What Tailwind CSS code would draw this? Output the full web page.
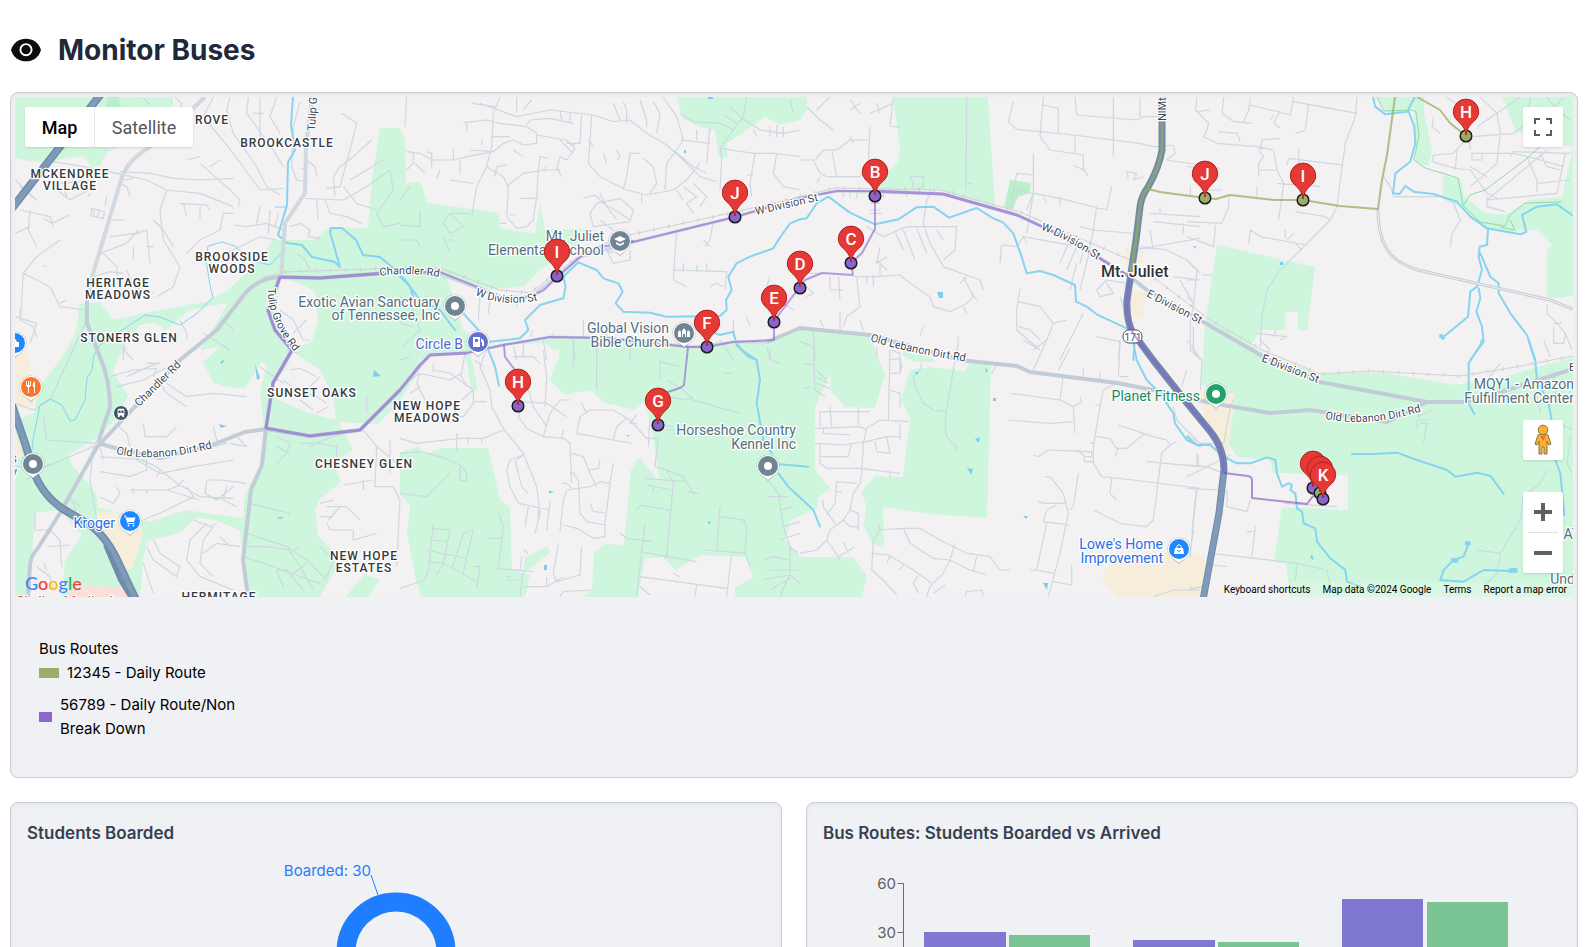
<!DOCTYPE html>
<html lang="en">
<head>
<meta charset="utf-8">
<title>Monitor Buses</title>
<script src="https://cdn.jsdelivr.net/npm/@tailwindcss/browser@4"></script>
</head>
<body class="bg-white font-['Inter',sans-serif] text-black">
<main class="h-screen overflow-hidden pt-8 pr-[9px] pl-[10px]">
  <header class="mb-6 flex items-center gap-4">
    <svg class="h-8 w-8" viewBox="0 2 32 32" aria-hidden="true"><path d="M1 18C3.500 10 9.200 6.700 16 6.700S28.500 10 31 18c-2.500 8-8.200 11.300-15 11.300S3.500 26 1 18Z" fill="#0d0d0d"/><circle cx="16" cy="17.700" r="5.600" fill="none" stroke="#fff" stroke-width="1.900"/></svg>
    <h1 class="text-[28px] leading-9 font-bold text-gray-800">Monitor Buses</h1>
  </header>

  <section class="rounded-lg border border-[#c9ced6] bg-[#f0f1f5] p-1 pb-9 inset-shadow-sm">
    <div class="relative overflow-hidden font-['Roboto',sans-serif]">
      <svg class="h-[500px] w-full" viewBox="15 97 1558 500" preserveAspectRatio="xMidYMid slice" role="img" aria-label="Map of bus routes around Mt. Juliet">
        <defs>
          <g id="pin"><path d="M0-1C-1-8-4.500-11.500-8.200-15-11-17.700-12.700-20.500-12.700-24.200A12.700 12.700 0 0 1 12.700-24.200C12.700-20.500 11-17.700 8.200-15 4.500-11.500 1-8 0-1Z" fill="#e53935" stroke="#b3211c"/></g>
          <g id="poi"><path d="M0 15.500C-2 11.500-11.500 9.500-11.500 0a11.500 11.500 0 0 1 23 0C11.500 9.500 2 11.500 0 15.500Z" fill="#8a949c" opacity=".5"/><path d="M0 14C-2 10.500-11 9.500-11 0a11 11 0 0 1 22 0C11 9.500 2 10.500 0 14Z" fill="#fff"/></g>
        </defs>
        <rect x="0" y="90" width="1590" height="520" fill="#f3f1f2"/>

        <!-- Parks and woods -->
        <g fill="#cef6dd">
          <path d="M15 97H173V120L108 152 100 165 92 167 83 156 65 158 50 163 30 161 15 158Z"/>
          <path d="M15 422L35 412 37 390 60 360 75 335 80 304 100 302 113 320 150 312 205 302 225 292 245 275 262 258 272 240H313L330 227 368 228 372 180 380 128H400L405 140 406 183 421 182 427 203 500 213 499 228 535 234 540 203 545 229 585 229 600 240 583 242 540 270 520 290H493L470 285 447 275 463 330 480 345 470 352 478 390 471 391 465 355H430L400 400 420 400 417 445 424 455 443 447 488 448 500 500 510 507 512 570 530 575 525 597H421L415 575 407 533 410 505 400 495V597H15Z"/>
          <path d="M495 345L550 338 630 338 690 345 767 342 800 328 870 337 885 375 875 408 845 407 830 390 831 373 815 407 815 470 830 488 818 498 817 508 790 520 785 540 800 557H853L867 575 862 597H735L735 587 753 578 747 557 700 555 675 570 663 557 645 558 638 597H582L592 590 594 553 605 544 624 545 632 460 640 458 660 483 650 420 645 400 635 410 605 403 590 390 565 395 550 380 560 355 545 343Z"/>
          <path d="M528 535L538 537 551 552 533 566 523 573Z"/>
          <path d="M903 350L930 355 935 362H915L903 356ZM910 370L930 367 965 371 970 362 991 364 987 518 930 514 883 507 884 548 872 543 864 526 866 505 861 492 875 476 903 477 910 418 901 400Z"/>
          <path d="M677 97L682 118 700 127 715 130 719 157H727V143L740 135 765 117 780 125 800 120 807 110V97ZM893 97L900 150 897 163 870 189 938 189 995 206 988 97Z"/>
          <path d="M1217 245L1315 267 1307 330H1298V312H1285V330H1260L1256 338 1250 345 1272 358 1320 374 1380 372 1455 385 1500 378 1573 357V597H1290L1286 563 1274 562 1282 507 1348 510V475L1273 473 1270 460 1238 457 1225 440 1235 395 1201 385 1205 325Z"/>
          <path d="M1375 97L1390 115 1414 108 1416 162 1428 166 1432 150 1424 113V97ZM1443 175L1462 180 1464 196 1485 213 1505 215 1530 200 1562 197 1573 147V295L1560 298H1547V250L1552 245 1537 230 1520 230 1510 234 1490 230 1470 215 1443 195ZM1502 97H1573V148L1515 130Z"/>
        </g>
        <path fill="#b9efcb" d="M107 97H118L124 115H105ZM1010 180L1031 183 1030 193 1018 197 1013 209 1004 208Z"/>

        <!-- Neighbourhoods inside the green belt -->
        <g fill="#f3f1f2">
          <path d="M128 395L113 372 122 350 140 325 155 322 165 330 190 310 215 305 228 303 200 350 220 347 203 362 213 382 225 387 245 388 262 362 267 366 260 390 264 430 262 460 245 495 243 518 185 510 150 522 110 510 98 508 97 495 85 480 72 465 68 455 98 437 115 420Z"/>
          <path d="M280 278L300 283 315 292 318 320 312 342 296 348 275 325ZM293 352L320 370 333 395 336 420 306 412 278 400 268 385 285 370Z"/>
          <path d="M338 422L378 424 400 400 422 400 417 447 400 452V597H368L380 580 365 575 345 597H320L340 560 318 535 315 510 320 499 341 482 333 463 353 450Z"/>
          <path d="M35 513L60 510 82 535 65 560 62 597H30L32 555ZM147 541L180 533 195 518 215 520 240 530 244 565 250 597H140L143 560Z"/>
          <path d="M420 360L455 352 466 358 472 392 488 392 480 352 498 345 560 350 548 380 570 400 620 420 640 455 600 520 520 560 512 505 500 448H420ZM495 330L463 330 447 278 480 290 540 285 580 255 700 235 700 335 550 335Z"/>
        </g>
        <g fill="#f6eddb">
          <path d="M15 345L28 355 34 405 15 410ZM96 513L110 511 140 520 143 535 132 570 124 569 96 525ZM15 430L23 455 15 462Z"/>
          <path d="M1124 248L1142 247 1143 263 1126 263ZM1125 290L1145 292 1144 318 1122 317ZM1200 390L1235 396 1228 452 1220 448 1205 425ZM1107 566L1130 558 1187 549 1206 560 1200 597H1117L1102 580Z"/>
        </g>
        <path fill="#fbdfdd" d="M70 590L90 586 124 588 128 597H70Z"/>

        <!-- Residential streets -->
        <g fill="none" stroke="#cdd8e1" stroke-width="3.600" stroke-linejoin="round">
          <g transform="scale(.33333)">
            <path d="M430 292L450 315M525 292 545 310 540 330M690 292L680 330 700 400 770 500 800 560 840 585M745 292 740 340 820 450 850 500M640 292 610 350 700 460 780 570 850 565M780 292V420M830 292 810 350 840 400M900 305L880 380 875 500 890 540 915 545M920 480L945 500 950 530M905 505H920M1025 340L1070 370 1050 450 1020 560 980 565M1115 420L1060 470 1020 500 1000 530 1005 590M1150 480L1100 510 1050 540M1170 510L1100 560 1030 600 915 595M1170 510L1180 570 1130 640 1150 680 1200 670M1030 560L1070 610 1130 630M975 600L990 640 1040 650 1085 670M870 680L900 670 930 690 925 710 960 715M950 600L955 660M890 760 915 780 930 810"/>
            <path d="M160 485L250 500 350 520 440 540 500 570M360 515 450 520 520 535 600 540 700 535M355 550L380 560 390 590M370 540L400 535M500 570L600 580 700 620M600 490 690 570 720 600 715 620M500 570L480 630 490 720 540 800 520 860 470 890M540 610L620 615 630 630M550 610 560 650M600 620V655M460 660L490 690 520 740M335 660H375M330 710 410 700 440 690 450 790M400 740V780M310 760 350 800 355 850M60 630L150 650 160 680M90 630L85 690 110 740M45 700L90 680M180 720L110 770 70 820 62 950M130 655 155 670 210 645M280 830L330 815 370 820M130 795 140 800M45 540L110 600 60 560M160 560L210 600 265 570 250 545 180 550M190 560 200 590M270 580L265 590M320 590 315 620M275 625L313 635 310 655 273 648ZM283 627 280 650M297 632 292 653M700 640L670 640 660 690 600 720 560 760M700 675 740 680 800 670 850 690M780 620 770 670M810 630 805 700M835 640 825 680M660 770L720 740 780 710 830 720M70 820L150 860 180 920 260 930M180 910 200 900M380 810L400 860 460 880M300 760L380 730 415 690M440 740 460 740M560 480 600 470M630 500 660 480M760 340H790M770 440 810 440"/>
          </g>
          <g transform="translate(0 300) scale(.33333)">
            <path d="M60 30V60L100 80 110 110M45 50 110 70 90 130M260 60 150 300 100 330 45 310M130 345 140 420 290 430M45 500H140L290 435M150 490 80 540M330 230 400 210 470 205 460 230M350 260 430 240 560 170M370 180 370 140 380 150M400 180 370 150M380 230 470 190M440 190H480M480 250 500 280 560 320M500 250 560 290 640 280 740 290M540 60 560 100 560 120M610 100 690 150M670 60 700 90M345 370 380 400 390 440M430 370 435 410M435 410H500L530 380M640 380 650 420 680 430 640 440M700 400 740 440 690 430M300 440 310 480M280 440 270 540 280 600 290 660M300 470 440 480 440 510 390 530 300 515M400 470 470 500 530 550 600 590 700 595M410 480 480 520 580 500 700 480M470 530 480 510M390 570H500L530 560M400 565V580M440 568V580M500 570 600 600M530 560 550 540M620 540 660 540 700 545 740 550M620 540 615 580 650 600 700 560M680 560 670 600 710 620M560 560 580 590 500 630 430 660M200 580 220 610 230 640M220 600 240 620M300 590 340 610 360 580 350 560M105 640V690L150 690 180 720 185 800M110 800 150 830 160 870M130 790 140 810M145 740 210 735M620 670 570 720 560 780 600 830 700 870M640 680 610 720 600 790 640 830M460 720 480 760 540 800 530 830 460 780 440 740M430 790 460 880M720 740 650 730 610 760M660 710 690 740M580 660 630 680 650 670M730 770 820 800 900 830 960 850M740 700 860 740 920 780 980 840M860 740 900 800 940 870M740 740 800 740 870 750M830 810H860L910 870M830 810 850 860M870 760 900 740M920 790 880 820M960 740 1000 780 980 830M780 200 850 250M870 210 900 205 950 230M850 240 890 270 950 290 980 310M900 300 940 330M930 260 960 230M950 340 985 320M860 150 900 160M840 30 880 60 910 120 930 120M880 100 920 60M830 410 870 430 860 460 830 490M830 440 870 460M900 430 960 430 1010 440 1010 470M930 440 970 420 1030 400M1100 290 1100 340M1090 390 1130 440 1180 480 1200 500M1130 440 1125 560 1180 560M1170 420V520M1030 555 1120 540M1090 540V570M980 620 1040 620 1080 660M985 660 1020 620M980 670 990 690 1060 690M1000 650 960 650M1060 690 1060 720 1130 700M1180 560 1200 600 1190 800M750 610 870 640M960 610 1000 600"/>
          </g>
          <g transform="translate(400 90) scale(.33333)">
            <path d="M20 20 15 110M300 22 280 70 275 170 260 230 230 290 215 380M215 40 290 50M240 40 350 80 450 60 580 75 640 95 690 90 740 130 800 165 850 210 900 260 950 275M350 22V65M395 30 370 60M480 60 485 90M510 65V100M380 105 390 90 450 85 520 100M190 98 260 90 300 100 380 110 410 130 410 160 370 165 340 150 310 160 280 185 210 180M200 98V125M245 150V165M275 140H330M410 135 500 150 525 175 500 210 480 200 470 240M480 150 520 190M500 155 525 165M340 180 370 200M280 185 200 200 160 210 100 210 60 190 20 185M80 185 95 190 95 230M40 190V220L20 240M160 175V210M180 210V250M45 220 75 250M120 240 110 265M150 270 220 280M260 230 310 260 325 290 320 380 350 415 380 410 400 390 410 320 415 240 420 200M285 260 290 230 320 225M320 290 370 250 440 240 480 240M360 325H415M330 375H345M320 400 300 400M420 200 445 205M440 225 430 240M470 230 485 260M545 75 540 160 500 160M575 75 565 220 600 260 680 300 740 315 820 300 860 270 900 220M565 150 580 170M640 40 660 90M670 35 680 60 680 100M720 30 740 90 740 110M760 35 780 70 770 130M790 22 830 80 850 150 830 180 800 220 795 300M845 150 930 160M890 120V150M930 110 920 220M820 180 880 230 920 250M610 190 620 220M650 180 660 200 650 210M690 190 680 260 670 300M690 190 720 190M730 205 760 230 770 280 750 310M725 310V340M550 325 585 315M585 315 610 340 660 370 690 390M600 310 620 350 650 390M570 370 590 340 660 325 700 360 690 395 580 410 570 370M640 420 600 390M850 290 890 320 860 340 880 370M880 280 920 320 900 350M830 300 850 330M960 300 965 200 960 175 1000 120 960 100 880 95 840 70M1040 20 1030 80 1000 120M960 175 1060 190 1120 190 1200 200M970 75 1010 100M990 50 1020 80 1080 120 1150 130 1200 120M1130 190 1120 250 1150 290 1200 300M1065 190 1050 280 1055 320M1040 255H1060M1170 30 1180 70M1060 120 1070 140M1110 110 1110 140M1130 105V140M1150 110V140"/>
            <path d="M830 420 820 570 860 590M820 540 980 545 975 600M850 520V545M890 525V545M920 520V545M940 395 930 450 915 470M910 450 930 470M930 590 950 580 970 590M620 480 640 520 690 510 690 480M0 405 60 410 60 360M130 400 150 370 210 370M150 370 190 410 150 430 130 400M130 440 150 490M140 450H160M0 450 50 450 60 470M0 330 30 290M0 620 40 660 60 720 10 770M0 700 40 710M390 740 400 720M460 745V730M550 740V690M620 745V700M240 620 235 690M270 630 265 670M350 650 350 620M340 770 350 810M370 760V790M430 750 440 810M520 745 525 810M590 745V790M1000 690V740M1040 680 1050 710M1110 780V810M600 470 640 490M1110 560 1100 590M1150 640 1180 660"/>
          </g>
          <g transform="translate(400 340) scale(.33333)">
            <path d="M260 25 240 80 270 150 275 200 310 265 370 340 410 440 420 520 405 580M225 60 250 80M195 40 185 100 150 120 60 100 50 130 80 190M30 160 60 140M100 70V95M0 60 30 50M60 100 30 120M180 100 200 140M185 180 220 150M100 90 150 100 220 150 220 190 190 230 160 230M220 185H260M0 295 50 310 180 295 250 295 310 270M170 280V330M205 295V310M245 295V310M430 30 440 110 435 200M340 50 400 50 420 70M370 30V50M380 130 400 200 440 260M370 185 440 190 500 230M370 185 355 230 380 265 430 290 490 295 510 310 515 430M480 180 450 220 430 290M480 180H510M490 270 485 295M545 190 560 220M530 280 540 230 570 210 640 210 690 240 740 295 770 295M530 280 640 300 695 310M640 300 650 260 680 235M710 225 690 250M750 235 745 320M775 290 765 380 800 390 820 430 800 650M710 250 690 250M800 390 850 410 880 460M730 415 860 425M740 435 815 450M760 440V460M895 460 860 455M720 495 810 510M720 495 710 510M370 345 330 360 320 390 330 440 355 490 450 510M345 360 365 440 385 460M370 345 350 360M385 500 375 560M415 500V530M450 485 440 570M520 400 535 420 540 520 560 545 615 555M515 340 550 350 570 400 590 440M600 360 595 385 570 390M640 370 630 430 600 425 570 440 500 450 490 480 480 575M630 430 615 550 615 590 580 595 530 565 490 555M570 490 580 515 615 518M510 400 525 400M485 430H500L515 445M475 610 460 700 470 725 540 705 545 620M370 740 440 740 490 710M440 710V740M370 690 360 770M290 685 400 695M295 680 310 560 295 520M260 595 305 595M320 720 370 720M320 710H330M365 650 360 690M370 630 385 640M100 550 85 690 75 720 0 745M75 630 200 655M100 565 150 570M90 600 145 605M85 665 130 670 230 725M215 570 190 580 155 690M220 570 200 655 190 700M240 680 230 745M220 680H240M150 570 130 670 110 705M0 340 60 335 120 350 180 375 200 400 200 425 180 420 180 380M0 460 80 470 120 430 150 400M480 770 490 755 580 750M660 580 680 595 760 605M735 550 710 770M720 635 890 665M790 645 795 655M720 710 980 745M720 740 750 765M890 735 885 770M820 700 840 710M960 500 950 630M960 530 1030 540 1040 560 1035 640 1050 680M915 630 1040 640M995 640 980 770M520 0V90M590 0V150M690 0 690 60M780 65 840 80M800 120 850 150 880 180 1020 220M780 60V120M800 170 860 180 880 170M960 0 1000 60M1100 20 1110 60 1140 70M970 100 1000 100M1105 420 1135 460 1150 560 1170 620V700L1140 770M1105 470H1165M1140 510 1180 500M1150 560 1200 545M1140 600 1200 580M1090 660 1120 650 1170 660M1100 690H1200M1085 720 1170 705 1200 730M1110 750 1170 715M1195 640 1170 620M780 270H820M785 255 820 260"/>
          </g>
          <g transform="translate(800 90) scale(.33333)">
            <path d="M20 50 60 90 100 120M50 60 90 20M150 30 180 70M150 60 180 40M210 70 280 40M230 40 240 70M280 22 270 110M275 110 300 110M0 210 40 210 60 250 80 260 180 260 205 230 210 110M45 210 70 180 110 180 150 150 205 150M95 180 110 260M150 140 160 160M60 260 50 280M500 22 500 120 497 300M500 280H515M335 300 340 280 330 260 370 260 370 290 340 300M640 35 625 95 650 118 720 125 820 135 1020 160 1060 170 1085 170 1120 165 1125 190 1100 210 1200 225M730 22 720 140 750 180 850 195 850 240 820 225M730 45 775 55 775 130M825 20 830 75 1010 90 1030 80 1080 80M1020 22V80M940 22V200M825 140V190M850 235 865 260M980 245 1010 250 1000 270 1030 260M980 245 985 265M650 250 700 255 700 190M650 250 630 370M700 255 700 310 680 360M645 300 700 310 780 325 920 360 935 290M730 320 740 340M780 320V350M890 350 880 420 865 500 840 600M840 410 880 420 1000 430M700 310 680 430M600 520 605 465 650 470 670 440 780 460 850 470M670 440 680 460M810 450 780 520M830 470 800 540M850 480 840 520M830 520 810 600M550 600 540 570 430 530 390 460 370 400 380 330 400 300M200 410 250 440 320 410 470 410 465 480 430 510M285 425 310 480M310 420 345 510M350 415 380 490M410 420 430 450M240 470 230 520 260 500M230 510 260 540M240 520V555M0 550 60 550M160 560 230 560 300 555 330 580 390 620 400 650 450 665 500 640 520 620 490 560M480 580 500 560M510 600 530 630M490 650 500 670M10 580 40 610 20 620M90 560 90 600 130 600M115 560 120 630M170 565 180 650 140 680 130 710M60 690 70 710M120 665V720M180 690 190 720M200 560V580M220 555V590M210 360H240M210 370H245M210 340H240M150 300V320M130 300V320M170 305V325M250 300V325M320 300V320M390 300V320M460 300V320M1050 370 1200 380M1060 395 1200 410M1080 350V370M1150 400V430M1020 470 1100 480 1160 510 1200 550M1000 480 1200 445M1050 420 1060 480M1120 560 1200 570M1140 570 1180 640M660 595 650 660 650 720 720 780M655 635 720 650 760 700 740 750 700 780M655 710 690 720 720 750M760 700 800 690M850 670 780 810M890 740 960 755M960 755 955 810M890 600 920 570 980 580M890 600 900 620 940 610 920 580M960 620 970 650M1180 710V780L1200 810M475 740 470 810M370 710 360 740M40 720 45 810"/>
          </g>
          <g transform="translate(800 340) scale(.33333)">
            <path d="M0 5 40 20 45 150 75 170M10 145 30 140M50 90 80 120M50 110 85 130M50 130 90 145M10 70 45 75M230 20V50M270 30 265 240M270 60 300 55 305 80 300 100H270M275 30 300 40 300 100M270 150 300 160 300 200M470 30 440 210 435 250 440 290 470 320 465 335M365 70 360 90 340 110 350 150 370 190 400 210 440 215M575 100 590 75M790 105 780 180 820 200 825 280M635 160 780 180M625 240 750 250 820 245M820 200 845 185 840 170M740 0 700 90M810 25 775 90M670 0 720 30M850 85V110M900 95V120M960 0 955 110M960 110H985M60 215 210 215M60 215V260M90 200 95 260M175 205 175 255M45 265 180 260 200 270M70 265V280L150 285M325 245 240 240 200 265 190 310 185 400 180 430 160 460 150 510 130 540 90 570 80 600 50 630 0 640M45 310 130 315 200 305 260 290 300 290M300 250V300M225 305 230 335 270 340 260 290M60 310V370L80 385 180 385 300 400M60 350H145L155 310M270 400V415M110 425 170 430M110 425 105 490 80 525M70 480 70 500 105 550M105 455H125M150 510 175 520V570M130 540 150 560 175 560M80 600 115 650 165 620M115 650 120 665M130 605 145 640M215 690 220 600 240 570 310 565 360 565 420 600 500 640 570 650 600 690 630 690M310 565 330 610 400 655 450 660 510 690 560 705M465 610 450 660 430 700 390 740 380 770M530 650 520 695M220 640 265 645 340 690 395 730M215 690 250 720 290 765M260 670 270 650M300 690 310 675M355 705 340 730 355 760M435 735 400 760M495 770 500 755 545 750 550 770M235 550 240 570M700 345 715 350 745 330 870 335M830 330 850 345 855 365 880 365M845 335H875V350H855M950 130 910 150 900 200 880 320 880 370 905 410 1000 420 1200 445M885 195H905M870 310H885M890 290 930 295 950 325 980 325 1035 280M955 255 1060 290 1100 300 1110 315 1085 340 1060 540 1040 560 960 550 880 510M1110 315 1130 305M1040 365 1200 380M955 325 945 350M1195 345V380M1190 440 1170 650M935 415 930 460 950 480M735 410 750 410 790 460 805 520 780 640 745 770M835 400 820 500 810 510M715 485 730 490 800 490M730 545 740 510 770 495M730 545 810 555M740 550 710 690 690 690M710 690 760 700M760 725 815 735 815 675M1120 200 1130 240 1200 310M1145 140 1160 90M1060 770 1120 750 1200 750M1170 740 1185 750"/>
          </g>
          <g transform="translate(1187 90) scale(.33333)">
            <path d="M30 22 25 60 65 100 60 120 50 140 90 160 210 170 260 180 270 240 290 280 275 390M30 65 70 60M95 125 150 130 160 155M110 22 105 70 140 95 195 100M190 22 185 60 170 95M190 45 310 75 320 22M280 60 260 100 280 115M260 75 250 90M320 35 510 70M510 22 505 80 475 160 460 270 450 350 430 390 350 470 280 540 240 600 225 680 220 770M365 45 355 120 325 130M220 180 225 150 280 145M215 180 230 200 215 220 215 260M215 240 270 240M300 225 305 205 465 225M335 175V220M270 280 400 290M325 365 415 380 430 390M125 320 125 350 105 400 0 395M85 405 80 470 0 440M185 460 190 420 220 440 360 465M295 420V445M320 430 300 450M320 455 345 480M210 290V320M10 290V320M0 230 100 235M60 300 105 300M0 510 30 540 20 640 10 700M0 570H30M0 620 20 640M45 555H75M210 730 300 740 280 750M265 720V740M10 690V780L30 800M590 260 610 290 620 320 760 320 800 340 820 390 795 430 790 470M740 80 735 110 760 130M830 155 800 190 740 195 735 215 805 235 850 240 900 310 930 325M810 180 805 240M855 190H885V210H855V190M885 190 980 190 1060 210 1130 230M845 135 850 180M860 140 980 130 1050 80 1060 50M1000 22 930 70 870 110M780 22 860 80M880 22 930 70 940 130 930 220 850 290M850 230 900 260M1020 200 1050 270 1050 305M1150 190 980 185 970 200M1050 280 1150 270M1080 180 900 330M900 330 1110 310 1135 190M900 320 900 350 955 365M1030 22 1020 80 1100 130M1060 190 1080 230 1120 240M1080 22 1110 60 1150 90M1130 22 1060 100M1080 645V670L1110 700 1135 730 1130 760H1100V710M1100 700H1125M1135 730 1155 780"/>
          </g>
          <g transform="translate(1187 340) scale(.33333)">
            <path d="M0 0 45 60 40 150M0 375 60 380 110 400M0 445 100 450M30 340V380M30 445 15 570M20 570 15 600M75 640 330 670 420 690 430 740M75 675 120 680M205 560 195 650M180 575H200M330 675 325 720M120 450 120 500 180 515 190 480M290 490 450 500M690 210 700 240 730 240M690 240V270M700 250H720L710 310M690 230 740 210M0 285 40 310 110 310 130 200 140 180M220 0 250 30M130 345 0 410M1080 390 1060 430 1010 470 1000 540 940 640 930 700 890 740M870 630 940 640M940 70 900 120M1100 100 1110 200M1050 170 1060 220M1100 240 1155 270M1150 290 1140 370 1155 400M0 750 40 740 60 750M1070 0 1090 50"/>
          </g>
        </g>

        <!-- Creeks, ponds and rivers -->
        <g fill="none" stroke="#86d4ef" stroke-width="6" stroke-linejoin="round" stroke-linecap="round">
          <path stroke-width="2" d="M293 97 291 125 295 150 288 162 287 205 278 235 287 243 302 245 312 257 335 262 340 267 330 232 331 228 342 228 356 240 363 255 380 257 392 267 405 280 420 300 440 310 455 330"/>
          <path stroke-width="1" d="M275 207H287M285 250 270 265 250 260 235 246 222 242 208 246 206 260 210 285 213 298 195 315 180 325 160 317 145 315 125 328 100 345 94 355 92 370 87 378 85 400 75 420 70 421 62 405 50 399 40 405 33 440 32 450"/>
          <g transform="translate(400 90) scale(.33333)"><path d="M0 560 30 590 40 620M190 670 235 720 240 750M270 755 360 745 385 720 375 690 420 645 490 625 497 590 490 560 535 517 590 540 610 565 655 580 668 605 647 640 670 665 750 668 800 680 960 678 980 660 978 630 995 600 985 560 1010 520 1050 500 1120 475 1135 450 1170 400 1200 388M920 720 960 735 1000 725 1010 765 1045 800 1070 810"/></g>
          <g transform="translate(400 340) scale(.33333)"><path d="M265 30 285 80 297 137M1010 10 1025 30 1070 60 1080 120 1070 190 1090 300 1115 340M1140 373 1225 380M1135 400 1165 440 1240 510 1260 560"/></g>
          <g transform="translate(800 90) scale(.33333)"><path d="M0 388 20 385 50 340 85 320 150 368 225 403 295 388 350 352 400 350 447 383 530 354 580 385 610 398 640 430 665 500 680 550 720 543 760 555 825 585 828 635 860 650 890 673 980 715 1005 740 1000 810"/></g>
          <g transform="translate(800 340) scale(.33333)"><path d="M1000 10 1010 60 1040 120 1080 160 1120 220 1125 250 1160 300 1200 318"/></g>
          <g transform="translate(1187 90) scale(.33333)"><path d="M558 22 565 50 595 73 660 65 683 22M665 65 682 110 685 160 670 215 625 250 618 310 638 312 655 288 680 305 740 312 810 335 850 380 900 415 1000 433 1018 425 1005 375 1050 350 1110 343 1155 375M903 420 900 465 878 470 875 500 885 540 870 590 850 605 843 680 770 740M875 595 880 625 868 665 885 710 890 755 850 810M880 490 910 560 935 580 935 610 970 670 1020 735 1045 810"/><path stroke-width="12" d="M762 738 768 743"/></g>
          <g transform="translate(1187 340) scale(.33333)"><path d="M885 0 880 15 845 70 845 190 862 222M1025 0 1045 65 1050 120 1085 190 1110 330 1105 360 1120 400 1132 525M0 290 30 315 70 315 110 350 150 370 190 370 240 352 265 360 270 400 285 440 305 430 315 435 310 450 325 460 330 505 345 515 350 550 385 565 390 605 430 655 475 690 480 725 520 740M495 342 560 342 630 338 690 360 780 390 805 410 870 398 910 407 950 462M760 720 770 690 800 660 830 650 845 610M760 720 830 725 890 690 950 692 990 695"/><path stroke-width="14" d="M798 660 808 662M840 610H845M970 692 985 690"/></g>
        </g>
        <path fill="#7ccdec" d="M374 370 381 376 373 377ZM219 424 227 426 221 428ZM255 364 260 378 257 380ZM220 362 225 359 222 364ZM277 517H284L280 519ZM549 490 554 493 549 493ZM937 292 943 292 943 298 939 298ZM967 468 973 469 971 475ZM975 439 980 437 979 443ZM1043 583H1048L1047 590ZM993 398H996V401H993ZM1023 516H1028L1026 519ZM1312 554 1314 560 1310 558ZM1193 246H1196L1195 249ZM1280 262H1283V265H1280ZM914 372H919L917 375ZM985 368 988 370 986 373ZM708 97H713V99H708ZM684 150H686V153H684ZM626 435H629L628 437ZM708 521 711 522 709 525ZM544 565H547V570H544Z"/>

        <!-- Trails and railway -->
        <path fill="none" stroke="#94d6ae" d="M1377 97 1384 111 1412 110 1416 112 1419 135 1414 160 1425 168 1458 178 1463 205 1480 222 1505 226 1510 215 1525 203 1562 202M1463 206 1470 195 1485 190 1525 160 1545 142M1500 227 1515 230 1510 220"/>
        <g fill="none" stroke="#cfd1d4">
          <path d="M213 330 240 300 262 278 285 272 400 268 442 269 500 290 530 293 580 255 620 237 735 212 835 188 940 190 1020 212 1130 260 1210 320 1262 350 1320 374 1370 371 1460 376 1510 368 1573 356"/>
          <path stroke-width="4" stroke-dasharray="1 14" d="M285 272 400 268 442 269 500 290 530 293 580 255 620 237 735 212 835 188 940 190 1020 212 1130 260 1210 320 1262 350 1320 374 1370 371 1460 376 1510 368 1573 356"/>
        </g>

        <!-- Main roads -->
        <g fill="none" stroke="#c2ccd6" stroke-width="4" stroke-linejoin="round">
          <path stroke="#d0d8e0" d="M205 97 175 125 150 147Q127 160 121 180L110 217 92 277 87 300"/>
          <path d="M87 300V323L100 357Q110 380 110 407L98 443M28 597 30 565Q31 555 38 548L60 513 97 447 127 415 180 360 217 330 240 300Q255 278 280 277L320 278 400 272M1130 277 1147 290 1200 320 1264 357 1320 382 1427 402 1464 402 1507 390 1573 369"/>
          <path stroke="#d0d8e0" d="M312 97 306 147 305 193 285 223 281 277"/>
          <path stroke="#d0d8e0" stroke-width="3" d="M400 272 440 274 500 297 530 297 557 277 580 257 633 242 735 217 800 198 837 191 943 194 1017 215 1067 238 1130 277M400 390 430 355 467 353 503 345 550 337 607 338 693 347 733 342 767 342"/>
          <path d="M280 277 268 310 275 330 292 350 273 383 266 428 262 465 251 490 243 560 248 597M98 443 115 448 160 458 212 445 245 432 266 429 310 436 360 430 400 390M767 342 800 328 870 335 960 360 1017 366 1030 372 1117 383 1153 390 1187 398 1223 405 1270 413 1310 410 1387 422 1427 402"/>
          <path stroke-width="3" d="M1378 209C1378 245 1390 262 1418 270L1475 283 1550 300 1573 309"/><path stroke="#f3f1f2" stroke-width="1" d="M1378 209C1378 245 1390 262 1418 270L1475 283 1550 300 1573 309"/>
        </g>
        <g fill="none" stroke="#6f8bab" stroke-width="8" stroke-linejoin="round">
          <path d="M101 94 10 211M12 405 25 443 33 470Q42 495 63 509L90 525Q108 538 120 566L136 600"/>
          <path stroke-width="4" d="M105 545 120 580 132 600"/>
          <path stroke-width="7" d="M1162 90 1162 150Q1159 168 1148 187 1141 197 1140 207L1136 240 1127 300Q1126 320 1133 333L1153 360 1187 403 1210 431Q1224 448 1224 470L1219 513 1203 600"/>
        </g>
        <path fill="none" stroke="#809ab9" stroke-width="5" d="M101 94 10 211M12 405 25 443 33 470Q42 495 63 509L90 525Q108 538 120 566L136 600M1224 474 1219 513 1203 600"/>

        <!-- Bus routes -->
        <g fill="none" stroke="#8864d0" stroke-opacity=".6" stroke-width="2" stroke-linejoin="round">
          <path stroke-width="3" d="M1224 473Q1224 448 1210 431L1187 403 1153 360 1133 333Q1126 320 1127 300L1130 277 1067 238 1017 215 943 194 875 191M440 272 400 272 320 278 280 277 268 310 275 330 292 350 273 383 266 428 310 436 360 430 400 390 420 365 430 355 467 353"/>
          <path d="M875 191 837 191 800 198 735 217 633 242 600 247 580 257 557 277 544 290 530 297 505 298 440 272M467 353 503 345 550 337 607 338 688 347"/>
          <path stroke="#7a50b8" d="M1323 499 1313 496 1307 504 1252 498V480Q1252 477 1248 476L1224 473"/>
          <path d="M875 196V229L862 253 851 263 853 275 822 273 805 280 774 321V340L733 342 707 347 688 347 684 385 680 388 668 392 658 400V425M504 345 505 357 515 370 518 406"/>
        </g>
        <path fill="none" stroke="#98ae60" stroke-opacity=".65" stroke-width="3" stroke-linejoin="round" d="M1130 277 1136 240 1140 207Q1141 197 1148 187 1159 168 1162 150V95"/>
        <path fill="none" stroke="#98ae60" stroke-opacity=".75" stroke-width="2" stroke-linejoin="round" d="M1148 189 1160 192 1205 198 1216 199 1230 195 1275 200 1303 200 1340 206 1378 209 1382 180 1387 155 1395 97M1417 97 1440 110 1450 123 1466 136"/>

        <!-- Street names -->
        <defs>
          <path id="s1" d="M380 276Q412 271 450 279"/><path id="s2" d="M475 295Q507 309 548 298"/><path id="s3" d="M756 215L830 198"/><path id="s4" d="M1041 230Q1071 240 1110 269"/><path id="s5" d="M1146 296L1215 332"/><path id="s6" d="M1261 361L1335 390"/><path id="s7" d="M870 341Q920 356 985 364"/><path id="s8" d="M1325 419Q1378 429 1440 405"/><path id="s9" d="M116 454Q165 464 230 443"/><path id="s10" d="M139 407L195 352"/><path id="s11" d="M268 288Q266 322 305 364"/><path id="s12" d="M315 131L320 50"/><path id="s13" d="M1166 121L1166 20"/>
        </defs>
        <g class="text-[11px]" fill="#3a4657" stroke="#fff" stroke-width="2.500" stroke-linejoin="round" paint-order="stroke">
          <text><textPath href="#s1">Chandler Rd</textPath></text><text><textPath href="#s2">W Division St</textPath></text><text><textPath href="#s3">W Division St</textPath></text><text><textPath href="#s4">W Division St</textPath></text><text><textPath href="#s5">E Division St</textPath></text><text><textPath href="#s6">E Division St</textPath></text><text><textPath href="#s7">Old Lebanon Dirt Rd</textPath></text><text><textPath href="#s8">Old Lebanon Dirt Rd</textPath></text><text><textPath href="#s9">Old Lebanon Dirt Rd</textPath></text><text><textPath href="#s10">Chandler Rd</textPath></text><text><textPath href="#s11">Tulip Grove Rd</textPath></text><text><textPath href="#s12">Tulip Grove</textPath></text><text><textPath href="#s13">N Mt Juliet Rd</textPath></text>
          <text x="1569" y="371">E</text>
        </g>
        <rect x="1123" y="330" width="19" height="13" rx="6" fill="#fff" stroke="#4a5560"/><text x="1133" y="341" text-anchor="middle" class="text-[10px]" fill="#4a5560">171</text>
        <path fill="none" stroke="#8864d0" stroke-opacity=".6" stroke-width="2" d="M1128 322 1133 333 1142 346M610 246 634 241"/>

        <!-- Neighbourhood names -->
        <g class="text-[12px] font-medium tracking-[1px]" text-anchor="middle" fill="#343a40" stroke="#fff" stroke-width="2.500" stroke-linejoin="round" paint-order="stroke">
          <text x="212" y="124">ROVE</text><text x="287" y="147">BROOKCASTLE</text><text x="70" y="178">MCKENDREE</text><text x="70" y="190">VILLAGE</text><text x="232" y="261">BROOKSIDE</text><text x="232" y="273">WOODS</text><text x="118" y="287">HERITAGE</text><text x="118" y="299">MEADOWS</text><text x="129" y="342">STONERS GLEN</text><text x="312" y="397">SUNSET OAKS</text><text x="427" y="410">NEW HOPE</text><text x="427" y="422">MEADOWS</text><text x="364" y="468">CHESNEY GLEN</text><text x="364" y="560">NEW HOPE</text><text x="364" y="572">ESTATES</text><text x="219" y="601">HERMITAGE</text>
        </g>
        <text x="1101" y="277" class="text-[16px] font-medium" fill="#2f3338" stroke="#fff" stroke-width="3" paint-order="stroke">Mt. Juliet</text>

        <!-- Places -->
        <g class="text-[14px]" text-anchor="end" fill="#53707e" stroke="#fff" stroke-width="2.500" stroke-linejoin="round" paint-order="stroke">
          <text x="440" y="307">Exotic Avian Sanctuary</text><text x="440" y="320">of Tennessee, Inc</text><text x="604" y="241">Mt. Juliet</text><text x="604" y="255">Elementary School</text><text x="463" y="349" fill="#5767cc">Circle B</text><text x="669" y="333">Global Vision</text><text x="669" y="347">Bible Church</text><text x="796" y="435">Horseshoe Country</text><text x="796" y="449">Kennel Inc</text><text x="115" y="528" fill="#2a6ee6">Kroger</text><text x="1200" y="401" fill="#188a5b">Planet Fitness</text><text x="1163" y="549" fill="#2a6ee6">Lowe's Home</text><text x="1163" y="563" fill="#2a6ee6">Improvement</text><text x="1574" y="389">MQY1 - Amazon</text><text x="1574" y="403">Fulfillment Center</text><text x="1580" y="539">AT</text><text x="1575" y="584">Und</text><text x="17" y="463">s</text><text x="17" y="477">y</text><text x="113" y="607" fill="#d93025">Skyline Medical</text>
        </g>

        <g transform="translate(455 306)"><use href="#poi"/><circle r="10" fill="#6f8593"/><circle r="4" fill="#fff"/></g>
        <g transform="translate(768 466)"><use href="#poi"/><circle r="10" fill="#6f8593"/><circle r="4" fill="#fff"/></g>
        <g transform="translate(33 464)"><use href="#poi"/><circle r="10" fill="#6f8593"/><circle r="4" fill="#fff"/></g>
        <g transform="translate(1216 394)"><use href="#poi"/><circle r="10" fill="#22a06b"/><circle r="4" fill="#fff"/></g>
        <g transform="translate(620 241)"><use href="#poi"/><circle r="10" fill="#6f8593"/><path d="M0-5L6-2 0 1-6-2ZM-4 1 0 3 4 1V3L0 5-4 3Z" fill="#fff"/></g>
        <g transform="translate(684 333)"><use href="#poi"/><circle r="10" fill="#6f8593"/><path d="M-6 4V-1L-4-3-3-1V4ZM6 4V-1L4-3 3-1V4ZM-2 4V-2L0-5 2-2V4H1V1H-1V4Z" fill="#fff"/></g>
        <g transform="translate(478 342)"><use href="#poi"/><circle r="10" fill="#6270d0"/><path d="M-5 5V-5H2V5ZM-3-3V0H0V-3ZM3-4 6-1V4H4V0H3Z" fill="#fff" fill-rule="evenodd"/></g>
        <g transform="translate(31 387)"><use href="#poi"/><circle r="10" fill="#ff7427"/><path d="M-5-6V-2Q-5 0-3 0V6H-2V0Q0 0 0-2V-6H-1V-2H-2V-6H-3V-2H-4V-6ZM4-6Q1-4 2 0H3V6H4Z" fill="#fff"/></g>
        <g transform="translate(15 343)"><use href="#poi"/><circle r="10" fill="#1f88ff"/><path d="M-4-1H4V4H-4ZM-2-1Q0-7 2-1" fill="#fff"/></g>
        <g transform="translate(130 521)"><use href="#poi"/><circle r="10" fill="#1f88ff"/><path d="M-4-3.500H5.500L4 1H-2.500Z" fill="#fff"/><path d="M-6-5H-4.500L-2 2.500H4.500" fill="none" stroke="#fff"/><circle cx="-1.500" cy="4.500" r="1" fill="#fff"/><circle cx="3.500" cy="4.500" r="1" fill="#fff"/></g>
        <g transform="translate(1179 549)"><use href="#poi"/><circle r="10" fill="#1f88ff"/><path d="M-4-1H4L5 5H-5Z" fill="#fff"/><path d="M-2-1V-3Q0-6 2-3V-1" fill="none" stroke="#fff"/><path d="M-2 1Q0 4 2 1" fill="none" stroke="#1f88ff"/></g>
        <g transform="translate(121 413)"><circle r="7.500" fill="#3f5364" stroke="#fff"/><path transform="scale(.85)" d="M-3-5H3Q4-5 4-3V2Q4 3 3 3L4 5H2L1 3H-1L-2 5H-4L-3 3Q-4 3-4 2V-3Q-4-5-3-5ZM-3-3V0H-.500V-3ZM.500-3V0H3V-3Z" fill="#fff" fill-rule="evenodd"/></g>

        <!-- Bus stops -->
        <g class="text-[17px] font-medium" text-anchor="middle" fill="#fff">
          <g fill="#8864cf" stroke="#1c1c1c" stroke-width="1.500"><circle cx="875" cy="196" r="5.800"/><circle cx="851" cy="263" r="5.800"/><circle cx="800" cy="288" r="5.800"/><circle cx="774" cy="322" r="5.800"/><circle cx="707" cy="347" r="5.800"/><circle cx="658" cy="425" r="5.800"/><circle cx="518" cy="406" r="5.800"/><circle cx="557" cy="276" r="5.800"/><circle cx="735" cy="217" r="5.800"/><circle cx="1313" cy="488" r="5.800"/><circle cx="1320" cy="493" r="5.800" fill="#98ae64"/><circle cx="1323" cy="499" r="5.800"/><g fill="#98ae64"><circle cx="1466" cy="136" r="5.800"/><circle cx="1303" cy="200" r="5.800"/><circle cx="1205" cy="198" r="5.800"/></g></g>
          <use href="#pin" x="875" y="196"/><text x="875" y="178">B</text>
          <use href="#pin" x="851" y="263"/><text x="851" y="245">C</text>
          <use href="#pin" x="800" y="288"/><text x="800" y="270">D</text>
          <use href="#pin" x="774" y="322"/><text x="774" y="304">E</text>
          <use href="#pin" x="707" y="347"/><text x="707" y="329">F</text>
          <use href="#pin" x="658" y="425"/><text x="658" y="407">G</text>
          <use href="#pin" x="518" y="406"/><text x="518" y="388">H</text>
          <use href="#pin" x="557" y="276"/><text x="557" y="258">I</text>
          <use href="#pin" x="735" y="217"/><text x="735" y="199">J</text>
          <use href="#pin" x="1466" y="136"/><text x="1466" y="118">H</text>
          <use href="#pin" x="1303" y="200"/><text x="1303" y="182">I</text>
          <use href="#pin" x="1205" y="198"/><text x="1205" y="180">J</text>
          <use href="#pin" x="1313" y="488"/><use href="#pin" x="1320" y="493"/><use href="#pin" x="1323" y="499"/><text x="1323" y="481">K</text>
        </g>
      </svg>

      <div class="absolute top-[10px] left-[10px] flex h-10 rounded-xs bg-white text-[18px] shadow">
        <button type="button" class="w-[70px] border-r border-gray-200 font-medium text-black">Map</button>
        <button type="button" class="w-[98px] text-[#565656]">Satellite</button>
      </div>
      <button type="button" aria-label="Toggle fullscreen view" class="absolute top-[10px] right-[10px] flex size-10 items-center justify-center rounded-xs bg-white shadow">
        <svg class="size-[18px]" viewBox="0 0 18 18" fill="none" stroke="#5a5a5a" stroke-width="2"><path d="M1 6V1H6M12 1H17V6M17 12V17H12M6 17H1V12"/></svg>
      </button>
      <div class="absolute right-[10px] bottom-6 flex flex-col gap-8">
        <button type="button" aria-label="Street View" class="flex size-10 items-center justify-center rounded-xs bg-white shadow">
          <svg class="h-8 w-5" viewBox="0 0 20 32"><path d="M5 11Q10 9 15 11L18 20Q17 22 15 20L14 17V30H11V23H9V30H6V17L5 20Q3 22 2 20Z" fill="#fbb034" stroke="#8b7443"/><path d="M7 12H13L10 17Z" fill="#e2772a"/><circle cx="10" cy="6" r="4.800" fill="#fbb034" stroke="#8b7443"/></svg>
        </button>
        <div class="flex w-10 flex-col items-center rounded-xs bg-white shadow">
          <button type="button" aria-label="Zoom in" class="flex size-10 items-center justify-center"><svg class="size-[18px]" viewBox="0 0 18 18"><path d="M7 0H11V7H18V11H11V18H7V11H0V7H7Z" fill="#5f5f5f"/></svg></button>
          <span class="h-px w-[30px] bg-[#e0e0e0]"></span>
          <button type="button" aria-label="Zoom out" class="flex size-10 items-center justify-center"><svg class="size-[18px]" viewBox="0 0 18 18"><path d="M0 7H18V11H0Z" fill="#5f5f5f"/></svg></button>
        </div>
      </div>
      <a href="#" aria-label="Google" class="absolute bottom-0 left-[10px] font-['Lato',sans-serif] text-[18px] leading-7 font-medium"><span class="text-[#4285f4]">G</span><span class="text-[#ea4335]">o</span><span class="text-[#fbbc05]">o</span><span class="text-[#4285f4]">g</span><span class="text-[#34a853]">l</span><span class="text-[#ea4335]">e</span></a>
      <div class="absolute right-0 bottom-0 flex h-[14px] bg-[#f5f5f5]/30 text-[10px] leading-[14px] text-black">
        <button type="button" class="px-[6px]">Keyboard shortcuts</button><span class="px-[6px]">Map data ©2024 Google</span><a href="#" class="px-[6px]">Terms</a><a href="#" class="px-[6px]">Report a map error</a>
      </div>
    </div>

    <div class="mt-10 ml-6 w-[210px] text-[15px] leading-6">
      <p>Bus Routes</p>
      <ul>
        <li class="mb-2 flex items-center gap-2"><span class="h-[10px] w-5 shrink-0 bg-[#9aae6a]"></span>12345 - Daily Route</li>
        <li class="flex items-center gap-2"><span class="h-[10px] w-[13px] shrink-0 bg-[#8b66cf]"></span>56789 - Daily Route/Non Break Down</li>
      </ul>
    </div>
  </section>

  <div class="mt-6 grid grid-cols-2 gap-6">
    <section class="rounded-lg border border-[#c9ced6] bg-[#f0f1f5] p-4 inset-shadow-sm">
      <h2 class="text-[17px] leading-7 font-semibold text-gray-700">Students Boarded</h2>
      <svg class="mt-4 h-[200px] w-full" viewBox="27 863 738 200" role="img" aria-label="Students boarded: 30">
        <circle cx="396" cy="952" r="50" fill="none" stroke="#1f7dff" stroke-width="19"/>
        <path d="M371 875L378 895" stroke="#1f7dff"/>
        <text x="371" y="876" text-anchor="end" class="text-[15px]" fill="#1f7dff">Boarded: 30</text>
      </svg>
    </section>
    <section class="rounded-lg border border-[#c9ced6] bg-[#f0f1f5] p-4 inset-shadow-sm">
      <h2 class="text-[17px] leading-7 font-semibold text-gray-700">Bus Routes: Students Boarded vs Arrived</h2>
      <svg class="mt-4 h-[200px] w-full" viewBox="823 863 738 200" role="img" aria-label="Students boarded and arrived for each bus route">
        <path d="M897.500 883.500H903.500V982M897.500 932.500H903.500" fill="none" stroke="#6b6b6b"/>
        <g class="text-[15px]" text-anchor="end" fill="#5f5f5f"><text x="896" y="889">60</text><text x="896" y="938">30</text></g>
        <g fill="#7f78d0"><rect x="924" y="932" width="82" height="50"/><rect x="1133" y="940" width="82" height="42"/><rect x="1342" y="899" width="81" height="83"/></g>
        <g fill="#7ac494"><rect x="1009" y="935" width="81" height="47"/><rect x="1218" y="942" width="81" height="40"/><rect x="1427" y="902" width="81" height="80"/></g>
      </svg>
    </section>
  </div>
</main>
</body>
</html>
